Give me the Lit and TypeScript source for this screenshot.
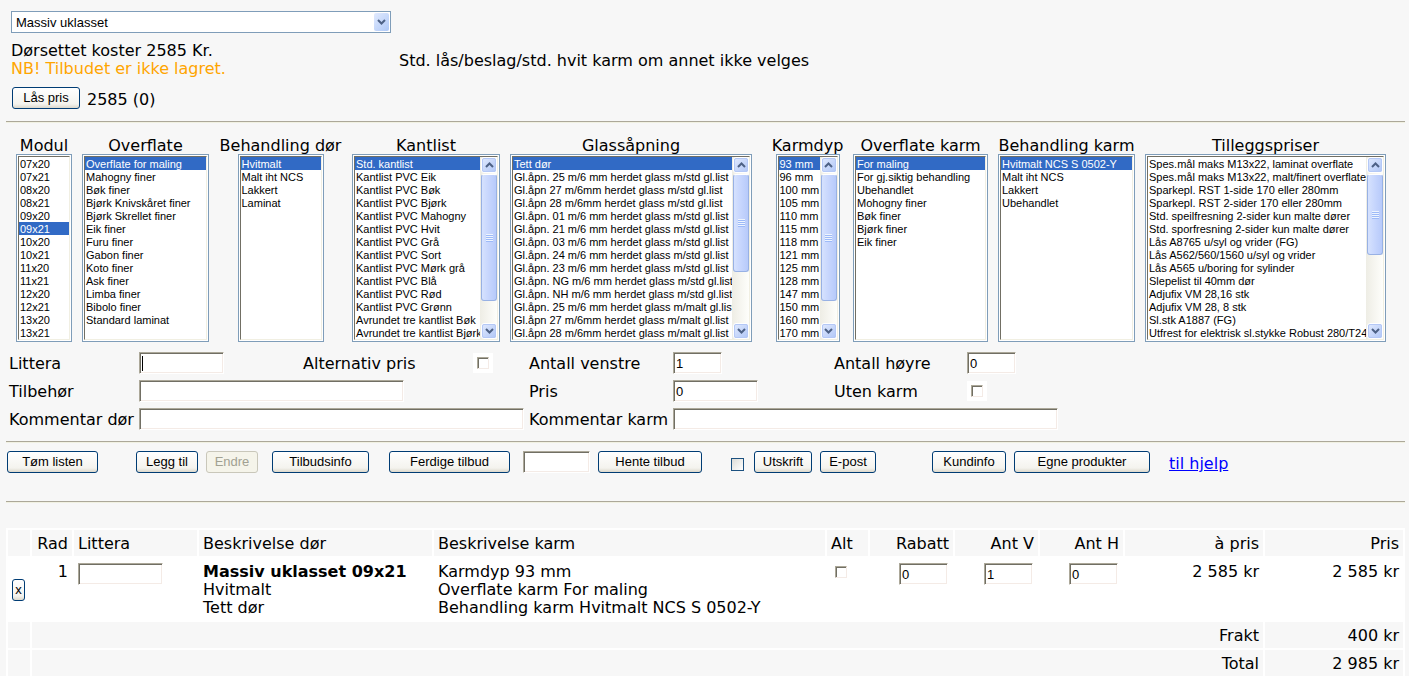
import { LitElement, html, css, svg, nothing } from "lit";
import { customElement, property } from "lit/decorators.js";
import { styleMap } from "lit/directives/style-map.js";

const chevron = (dir: "up" | "down") => html`<svg class="chevron" viewBox="0 0 9 6" width="9" height="6" aria-hidden="true">
  ${dir === "down"
    ? svg`<path d="M1 1 L4.5 4.5 L8 1" fill="none" stroke="#4d6185" stroke-width="2"/>`
    : svg`<path d="M1 5 L4.5 1.5 L8 5" fill="none" stroke="#4d6185" stroke-width="2"/>`}
</svg>`;

interface ListSpec {
  title: string;
  width: number;
  items: string[];
  selected?: number;
  thumb?: number;
}

const glass = (nr: string, kind: string, dot = true) =>
  dot ? `Gl.åpn. ${nr} m/6 mm herdet glass m/${kind} gl.list` : `Gl.åpn ${nr} m/6mm herdet glass m/${kind} gl.list`;

const doorLists: ListSpec[] = [
  {
    title: "Modul", width: 56, selected: 5,
    items: ["07x20", "07x21", "08x20", "08x21", "09x20", "09x21", "10x20", "10x21", "11x20", "11x21", "12x20", "12x21", "13x20", "13x21"],
  },
  {
    title: "Overflate", width: 127, selected: 0,
    items: ["Overflate for maling", "Mahogny finer", "Bøk finer", "Bjørk Knivskåret finer", "Bjørk Skrellet finer", "Eik finer", "Furu finer", "Gabon finer", "Koto finer", "Ask finer", "Limba finer", "Bibolo finer", "Standard laminat"],
  },
  { title: "Behandling dør", width: 86, selected: 0, items: ["Hvitmalt", "Malt iht NCS", "Lakkert", "Laminat"] },
  {
    title: "Kantlist", width: 148, selected: 0, thumb: 86,
    items: ["Std. kantlist", "Kantlist PVC Eik", "Kantlist PVC Bøk", "Kantlist PVC Bjørk", "Kantlist PVC Mahogny", "Kantlist PVC Hvit", "Kantlist PVC Grå", "Kantlist PVC Sort", "Kantlist PVC Mørk grå", "Kantlist PVC Blå", "Kantlist PVC Rød", "Kantlist PVC Grønn", "Avrundet tre kantlist Bøk", "Avrundet tre kantlist Bjørk"],
  },
  {
    title: "Glassåpning", width: 242, selected: 0, thumb: 66,
    items: ["Tett dør", glass("25", "std"), glass("27", "std", false), glass("28", "std", false), glass("01", "std"), glass("21", "std"), glass("03", "std"), glass("24", "std"), glass("23", "std"), glass("NG", "std"), glass("NH", "std"), glass("25", "malt"), glass("27", "malt", false), glass("28", "malt", false)],
  },
];

const frameLists: ListSpec[] = [
  {
    title: "Karmdyp", width: 64, selected: 0, thumb: 86,
    items: [93, 96, 100, 105, 110, 115, 118, 121, 125, 128, 147, 150, 160, 170].map((n) => `${n} mm`),
  },
  {
    title: "Overflate karm", width: 135, selected: 0,
    items: ["For maling", "For gj.siktig behandling", "Ubehandlet", "Mohogny finer", "Bøk finer", "Bjørk finer", "Eik finer"],
  },
  { title: "Behandling karm", width: 137, selected: 0, items: ["Hvitmalt NCS S 0502-Y", "Malt iht NCS", "Lakkert", "Ubehandlet"] },
  {
    title: "Tilleggspriser", width: 241, thumb: 55,
    items: ["Spes.mål maks M13x22, laminat overflate", "Spes.mål maks M13x22, malt/finert overflate", "Sparkepl. RST 1-side 170 eller 280mm", "Sparkepl. RST 2-sider 170 eller 280mm", "Std. speilfresning 2-sider kun malte dører", "Std. sporfresning 2-sider kun malte dører", "Lås A8765 u/syl og vrider (FG)", "Lås A562/560/1560 u/syl og vrider", "Lås A565 u/boring for sylinder", "Slepelist til 40mm dør", "Adjufix VM 28,16 stk", "Adjufix VM 28, 8 stk", "Sl.stk A1887 (FG)", "Utfrest for elektrisk sl.stykke Robust 280/T24"],
  },
];

@customElement("list-box")
export class ListBox extends LitElement {
  @property({ attribute: false }) spec!: ListSpec;

  static styles = css`
    :host { display: flex; flex-direction: column; align-items: center; }
    .title { line-height: 16px; white-space: nowrap; }
    .frame { display: flex; box-sizing: border-box; border: 1px solid #7f9db9; background: #fff; padding: 1px; }
    .inner { display: flex; flex: 1; min-width: 0; border: 1px solid; border-color: #716f64 #f1efe2 #f1efe2 #716f64; }
    select {
      appearance: none; flex: 1; min-width: 0; height: 182px; margin: 0; padding: 0; border: 0; border-radius: 0;
      outline: 0; overflow: hidden; background: #fff; color: #000; font: 11px/13px "Liberation Sans", Arial, sans-serif;
    }
    option { height: 13px; min-height: 13px; box-sizing: border-box; padding: 1px 0 0 1px; line-height: 12px; white-space: nowrap; }
    option:checked { background: linear-gradient(#316ac5, #316ac5); -webkit-text-fill-color: #fff; }
    .bar { display: flex; flex-direction: column; width: 17px; box-sizing: border-box; padding-left: 1px; background: linear-gradient(90deg, #eeede5, #fefefb); }
    .step {
      display: flex; align-items: center; justify-content: center; width: 16px; height: 16px; padding: 0;
      border: 1px solid #fff; border-radius: 3px; outline: 1px solid #b4c8f6; outline-offset: -2px;
      background: linear-gradient(135deg, #e1eafe, #b0c6f6);
    }
    .track { flex: 1; display: flex; flex-direction: column; padding: 1px 0; }
    .thumb {
      display: flex; align-items: center; justify-content: center; box-sizing: border-box; width: 16px;
      border: 1px solid #98b1e4; border-top-color: #fff; border-radius: 3px;
      background: linear-gradient(90deg, #d6e2fe, #c6d5fd 50%, #b7cafa);
    }
    .grip { width: 7px; height: 8px; background: repeating-linear-gradient(#eef4fe 0 1px, #9dbaf8 1px 2px); }
  `;

  render() {
    const s = this.spec;
    return html`
      <label class="title" for="list">${s.title}</label>
      <div class="frame" style=${styleMap({ width: `${s.width}px` })}>
        <div class="inner">
          <select id="list" size="14" ?multiple=${s.selected === undefined}>
            ${s.items.map((t, i) => html`<option ?selected=${i === s.selected}>${t}</option>`)}
          </select>
          ${s.thumb
            ? html`<div class="bar">
                <button class="step" aria-label="Opp" tabindex="-1">${chevron("up")}</button>
                <div class="track"><div class="thumb" style=${styleMap({ height: `${s.thumb}%` })}><span class="grip"></span></div></div>
                <button class="step" aria-label="Ned" tabindex="-1">${chevron("down")}</button>
              </div>`
            : nothing}
        </div>
      </div>
    `;
  }
}

@customElement("app-root")
export class AppRoot extends LitElement {
  static styles = css`
    :host {
      display: block; box-sizing: border-box; min-height: 100vh; padding: 11px 4px 0 6px;
      background: #f7f7f7; color: #000; font: 16px/18px "DejaVu Sans", Verdana, sans-serif;
    }
    hr { height: 1px; margin: 0; border: 0; background: #aca899; border-bottom: 1px solid #f1f1e2; }
    .top { display: grid; grid-template-columns: 388px 1fr; padding-left: 5px; height: 110px; }
    .combo { display: grid; width: 380px; height: 22px; margin-bottom: 9px; }
    .combo select {
      grid-area: 1 / 1; appearance: none; box-sizing: border-box; width: 100%; height: 22px; margin: 0; padding: 0 4px;
      border: 1px solid #7f9db9; border-radius: 0; background: #fff; color: #000;
      font: 13px "Liberation Sans", Arial, sans-serif;
    }
    .drop {
      grid-area: 1 / 1; z-index: 1; justify-self: end; align-self: center; display: flex; align-items: center; justify-content: center;
      width: 15px; height: 18px; margin-right: 2px; border-radius: 2px; background: linear-gradient(135deg, #e1eafe, #aec8f7); pointer-events: none;
    }
    .warn { color: #ffa500; }
    .lock { display: flex; align-items: center; gap: 7px; margin-top: 8px; padding-left: 1px; }
    .lock span { padding-top: 5px; }
    .note { padding-top: 41px; }
    .lists { display: flex; gap: 20px; padding: 15px 0 0 10px; }
    .doors, .frames { display: grid; gap: 10px; }
    .doors { grid-template-columns: 56px 127px 123px 148px 242px; }
    .frames { grid-template-columns: 71px 135px 137px 241px; }
    button {
      box-sizing: border-box; height: 22px; padding: 0 0 1px; border: 1px solid #003c74; border-radius: 3px; color: #000;
      background: linear-gradient(#fff, #f4f3ee 80%, #dcd8cc); font: 13px "Liberation Sans", Arial, sans-serif; white-space: nowrap;
    }
    button:disabled { border-color: #c9c7ba; background: #f5f4ea; color: #a1a192; }
    .field {
      box-sizing: border-box; height: 22px; margin: 0; padding: 0 2px; border: 1px solid; border-radius: 0;
      border-color: #aca899 #fff #fff #aca899; box-shadow: inset 1px 1px #716f64, inset -1px -1px #f4ebe6;
      outline: 0; background: #fff; color: #000; font: 13px "Liberation Sans", Arial, sans-serif;
    }
    .caret { background: linear-gradient(#000, #000) 2px 3px / 1px 15px no-repeat #fff; }
    .w49 { width: 49px; } .w67 { width: 67px; } .w85 { width: 85px; } .w265 { width: 265px; } .w385 { width: 385px; }
    .w52 { width: 52px; } .w56 { width: 56px; } .w58 { width: 58px; } .w62 { width: 62px; } .w68 { width: 68px; } .w74 { width: 74px; }
    .w91 { width: 91px; } .w97 { width: 97px; } .w104 { width: 104px; } .w121 { width: 121px; } .w136 { width: 136px; }
    .check {
      appearance: none; box-sizing: border-box; width: 12px; height: 12px; margin: 0; background: #fff;
      border: 1px solid; border-color: #aca899 #f4ebe6 #f4ebe6 #aca899; box-shadow: inset 1px 1px #716f64;
    }
    .pad { display: flex; align-items: center; justify-content: center; width: 20px; height: 20px; background: #fff; }
    .form {
      display: grid; grid-template-columns: 130px 164px 170px 56px 144px 161px 133px 1fr; grid-auto-rows: 22px; row-gap: 6px;
      align-items: center; padding: 10px 0 11px 3px; white-space: nowrap;
    }
    .form label { padding-top: 2px; }
    .span3 { grid-column: span 3; }
    .tools { display: flex; align-items: center; padding: 8px 0 28px 1px; gap: 8px; }
    .group { display: flex; align-items: center; gap: 8px; }
    .g1 { margin-left: 30px; } .g2 { margin-left: 6px; } .g3 { margin-left: 12px; } .g4 { margin-left: 5px; }
    .g5 { margin-left: 21px; } .g6 { margin-left: 48px; } .g7 { margin-left: 11px; }
    .xp { appearance: none; box-sizing: border-box; width: 13px; height: 13px; margin: 5px 2px 0 0; border: 1px solid #1c5180; background: linear-gradient(135deg, #dcdcd7, #fff); }
    .tools a { color: #00f; padding-top: 4px; }
    table { width: 100%; margin-top: 25px; table-layout: fixed; border-collapse: separate; border-spacing: 2px; background: #fff; }
    th, td { padding: 5px 4px 3px; font-weight: 400; text-align: left; vertical-align: top; height: 18px; white-space: nowrap; }
    th, .sum td { background: #f7f7f7; }
    .c1 { width: 22px; } .c2 { width: 40px; } .c3 { width: 123px; } .c4 { width: 233px; } .c6 { width: 41px; } .c7 { width: 83px; } .c8 { width: 138px; }
    .r { text-align: right; }
    .item .del { vertical-align: middle; }
    .del button { width: 13px; padding: 0 0 2px; display: block; }
    td .field { display: inline-block; margin: 0 1px 0 0; vertical-align: top; }
    td .check { display: block; margin: 3px 4px; }
  `;

  private field(id: string, label: string, cls: string, value = "", wrap = "") {
    return html`<label for=${id}>${label}</label>
      <div class=${wrap}><input id=${id} class="field ${cls}" type="text" .value=${value} /></div>`;
  }

  private check(id: string, label: string) {
    return html`<label for=${id}>${label}</label>
      <div class="pad"><input id=${id} class="check" type="checkbox" /></div>`;
  }

  render() {
    const box = (l: ListSpec) => html`<list-box .spec=${l}></list-box>`;
    return html`
      <div class="top">
        <div>
          <div class="combo">
            <select aria-label="Dørtype"><option>Massiv uklasset</option></select>
            <span class="drop">${chevron("down")}</span>
          </div>
          <div>Dørsettet koster 2585 Kr.</div>
          <div class="warn">NB! Tilbudet er ikke lagret.</div>
          <div class="lock"><button class="w68">Lås pris</button><span>2585 (0)</span></div>
        </div>
        <div class="note">Std. lås/beslag/std. hvit karm om annet ikke velges</div>
      </div>
      <hr />
      <div class="lists">
        <div class="doors">${doorLists.map(box)}</div>
        <div class="frames">${frameLists.map(box)}</div>
      </div>
      <div class="form">
        ${this.field("littera", "Littera", "w85 caret")} ${this.check("altpris", "Alternativ pris")}
        ${this.field("venstre", "Antall venstre", "w49", "1")} ${this.field("hoyre", "Antall høyre", "w49", "0")}
        ${this.field("tilbehor", "Tilbehør", "w265", "", "span3")} ${this.field("pris", "Pris", "w85", "0")}
        ${this.check("utenkarm", "Uten karm")}
        ${this.field("komdor", "Kommentar dør", "w385", "", "span3")}
        ${this.field("komkarm", "Kommentar karm", "w385", "", "span3")}
      </div>
      <hr />
      <div class="tools">
        <button class="w91">Tøm listen</button>
        <div class="group g1"><button class="w62">Legg til</button><button class="w52" disabled>Endre</button></div>
        <div class="group g2"><button class="w97">Tilbudsinfo</button></div>
        <div class="group g3"><button class="w121">Ferdige tilbud</button></div>
        <div class="group g4"><input class="field w67" type="text" aria-label="Tilbudsnummer" /><button class="w104">Hente tilbud</button></div>
        <div class="group g5"><input class="xp" type="checkbox" aria-label="Utskrift" /><button class="w58">Utskrift</button><button class="w56">E-post</button></div>
        <div class="group g6"><button class="w74">Kundinfo</button><button class="w136">Egne produkter</button></div>
        <div class="group g7"><a href="#hjelp">til hjelp</a></div>
      </div>
      <hr />
      <table>
        <colgroup>
          <col class="c1" /><col class="c2" /><col class="c3" /><col class="c4" /><col /><col class="c6" />
          <col class="c7" /><col class="c7" /><col class="c7" /><col class="c8" /><col class="c8" />
        </colgroup>
        <thead>
          <tr>
            <th></th><th class="r">Rad</th><th>Littera</th><th>Beskrivelse dør</th><th>Beskrivelse karm</th><th>Alt</th>
            <th class="r">Rabatt</th><th class="r">Ant V</th><th class="r">Ant H</th><th class="r">à pris</th><th class="r">Pris</th>
          </tr>
        </thead>
        <tbody>
          <tr class="item">
            <td class="del"><button aria-label="Slett rad">x</button></td>
            <td class="r">1</td>
            <td><input class="field w85" type="text" aria-label="Littera" /></td>
            <td><b>Massiv uklasset 09x21</b><br />Hvitmalt<br />Tett dør</td>
            <td>Karmdyp 93 mm<br />Overflate karm For maling<br />Behandling karm Hvitmalt NCS S 0502-Y</td>
            <td><input class="check" type="checkbox" aria-label="Alt" /></td>
            <td class="r"><input class="field w49" type="text" aria-label="Rabatt" .value=${"0"} /></td>
            <td class="r"><input class="field w49" type="text" aria-label="Ant V" .value=${"1"} /></td>
            <td class="r"><input class="field w49" type="text" aria-label="Ant H" .value=${"0"} /></td>
            <td class="r">2 585 kr</td><td class="r">2 585 kr</td>
          </tr>
          <tr class="sum"><td></td><td class="r" colspan="9">Frakt</td><td class="r">400 kr</td></tr>
          <tr class="sum"><td></td><td class="r" colspan="9">Total</td><td class="r">2 985 kr</td></tr>
        </tbody>
      </table>
    `;
  }
}
